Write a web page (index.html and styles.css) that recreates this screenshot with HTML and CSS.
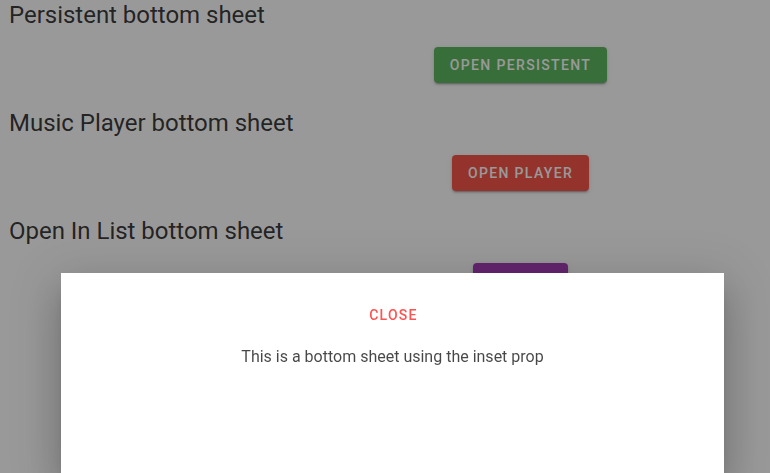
FILE: index.html
```html
<!DOCTYPE html>
<html lang="en">
<head>
<meta charset="utf-8">
<title>Bottom sheets</title>
<link rel="stylesheet" href="styles.css">
</head>
<body>
<main class="page">
  <section class="demo">
    <h2 class="demo-title">Persistent bottom sheet</h2>
    <div class="demo-actions">
      <button class="btn btn-green">Open Persistent</button>
    </div>
  </section>
  <section class="demo">
    <h2 class="demo-title">Music Player bottom sheet</h2>
    <div class="demo-actions">
      <button class="btn btn-red">Open Player</button>
    </div>
  </section>
  <section class="demo">
    <h2 class="demo-title">Open In List bottom sheet</h2>
    <div class="demo-actions">
      <button class="btn btn-purple">Open In</button>
    </div>
  </section>
</main>
<div class="overlay"></div>
<div class="sheet">
  <button class="btn-text">Close</button>
  <div class="sheet-text">This is a bottom sheet using the inset prop</div>
</div>
</body>
</html>
```
FILE: styles.css
```css
html, body {
  margin: 0;
  padding: 0;
  background: #ffffff;
  font-family: Roboto, "Liberation Sans", sans-serif;
  height: 100%;
  overflow: hidden;
}

.page {
  display: flex;
  flex-direction: column;
  gap: 24px;
  padding: 0 0 0 10px;
  margin-top: -1px;
}

.demo {
  display: flex;
  flex-direction: column;
  gap: 16px;
}

.demo-title {
  margin: 0 0 0 -1px;
  font-size: 24px;
  line-height: 32px;
  font-weight: 400;
  letter-spacing: -0.02px;
  color: rgba(0, 0, 0, 0.87);
}

.demo-actions {
  display: flex;
  justify-content: center;
  padding-left: 261px;
}

.btn {
  height: 36px;
  padding: 0 16px;
  border: none;
  border-radius: 4px;
  font-family: Roboto, "Liberation Sans", sans-serif;
  font-size: 14px;
  font-weight: 500;
  letter-spacing: 1.35px;
  text-transform: uppercase;
  color: #ffffff;
  box-shadow: 0 3px 1px -2px rgba(0,0,0,.2), 0 2px 2px 0 rgba(0,0,0,.14), 0 1px 5px 0 rgba(0,0,0,.12);
}

.btn-green { background: #4caf50; }
.btn-red { background: #f44336; }
.btn-purple { background: #9c27b0; }

.overlay {
  position: fixed;
  inset: 0;
  background: rgba(33, 33, 33, 0.46);
}

.sheet {
  position: fixed;
  left: 61px;
  bottom: 0;
  width: 663px;
  height: 200px;
  background: #ffffff;
  display: flex;
  flex-direction: column;
  align-items: center;
  box-shadow: 0 11px 15px -7px rgba(0,0,0,.2), 0 24px 38px 3px rgba(0,0,0,.14), 0 9px 46px 8px rgba(0,0,0,.12);
}

.btn-text {
  margin: 24px 0 0 2px;
  height: 36px;
  padding: 0 16px;
  border: none;
  background: transparent;
  font-family: Roboto, "Liberation Sans", sans-serif;
  font-size: 14px;
  font-weight: 500;
  letter-spacing: 1.25px;
  text-transform: uppercase;
  color: #ff5252;
}

.sheet-text {
  padding: 12px 0;
  font-size: 16px;
  line-height: 24px;
  color: rgba(0, 0, 0, 0.72);
}
```
